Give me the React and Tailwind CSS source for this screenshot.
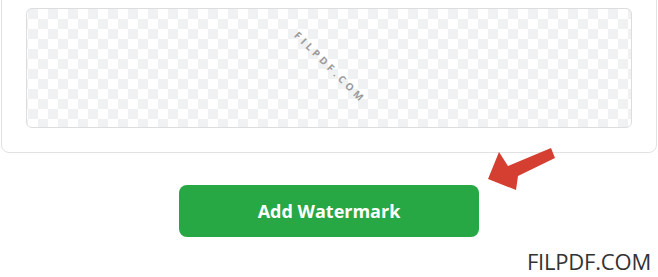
import React from 'react';

const WatermarkPreview = () => {
  return (
    <div className="relative h-[120px] rounded-md border border-[#dddddd] overflow-hidden bg-white bg-[conic-gradient(#f0f1f3_25%,#ffffff_0_50%,#f0f1f3_0_75%,#ffffff_0)] bg-[length:20px_20px] bg-[position:-9px_0px]">
      <div className="absolute inset-0 flex items-center justify-center">
        <span className="rotate-45 translate-x-[1px] -translate-y-[1px] text-[10px] font-bold tracking-[3.6px] text-[#9a9a9a]">
          FILPDF.COM
        </span>
      </div>
    </div>
  );
};

const App = () => {
  return (
    <div className="relative w-[658px] h-[277px] overflow-hidden bg-white font-['Open_Sans',sans-serif]">
      <div className="mx-[1px] -mt-[17px] rounded-lg border border-[#e2e2e2] bg-white p-6">
        <WatermarkPreview />
      </div>

      <div className="flex justify-center pt-8">
        <button
          type="button"
          className="w-[300px] h-[52px] rounded-lg bg-[#28a745] text-white text-[18px] font-bold"
        >
          Add Watermark
        </button>
      </div>

      {/* red pointer arrow */}
      <svg
        className="absolute left-[484px] top-[144px]"
        width="76"
        height="52"
        viewBox="0 0 76 52"
        aria-hidden="true"
      >
        <polygon
          fill="#d53f32"
          points="67,4 71,14 34,32 32,46 4,35 15,8 24,22"
        />
      </svg>

      <div className="absolute right-[7px] bottom-[5px] text-[22px] leading-none text-[#333333] tracking-[-0.2px]">
        FILPDF.COM
      </div>
    </div>
  );
};

export default App;
